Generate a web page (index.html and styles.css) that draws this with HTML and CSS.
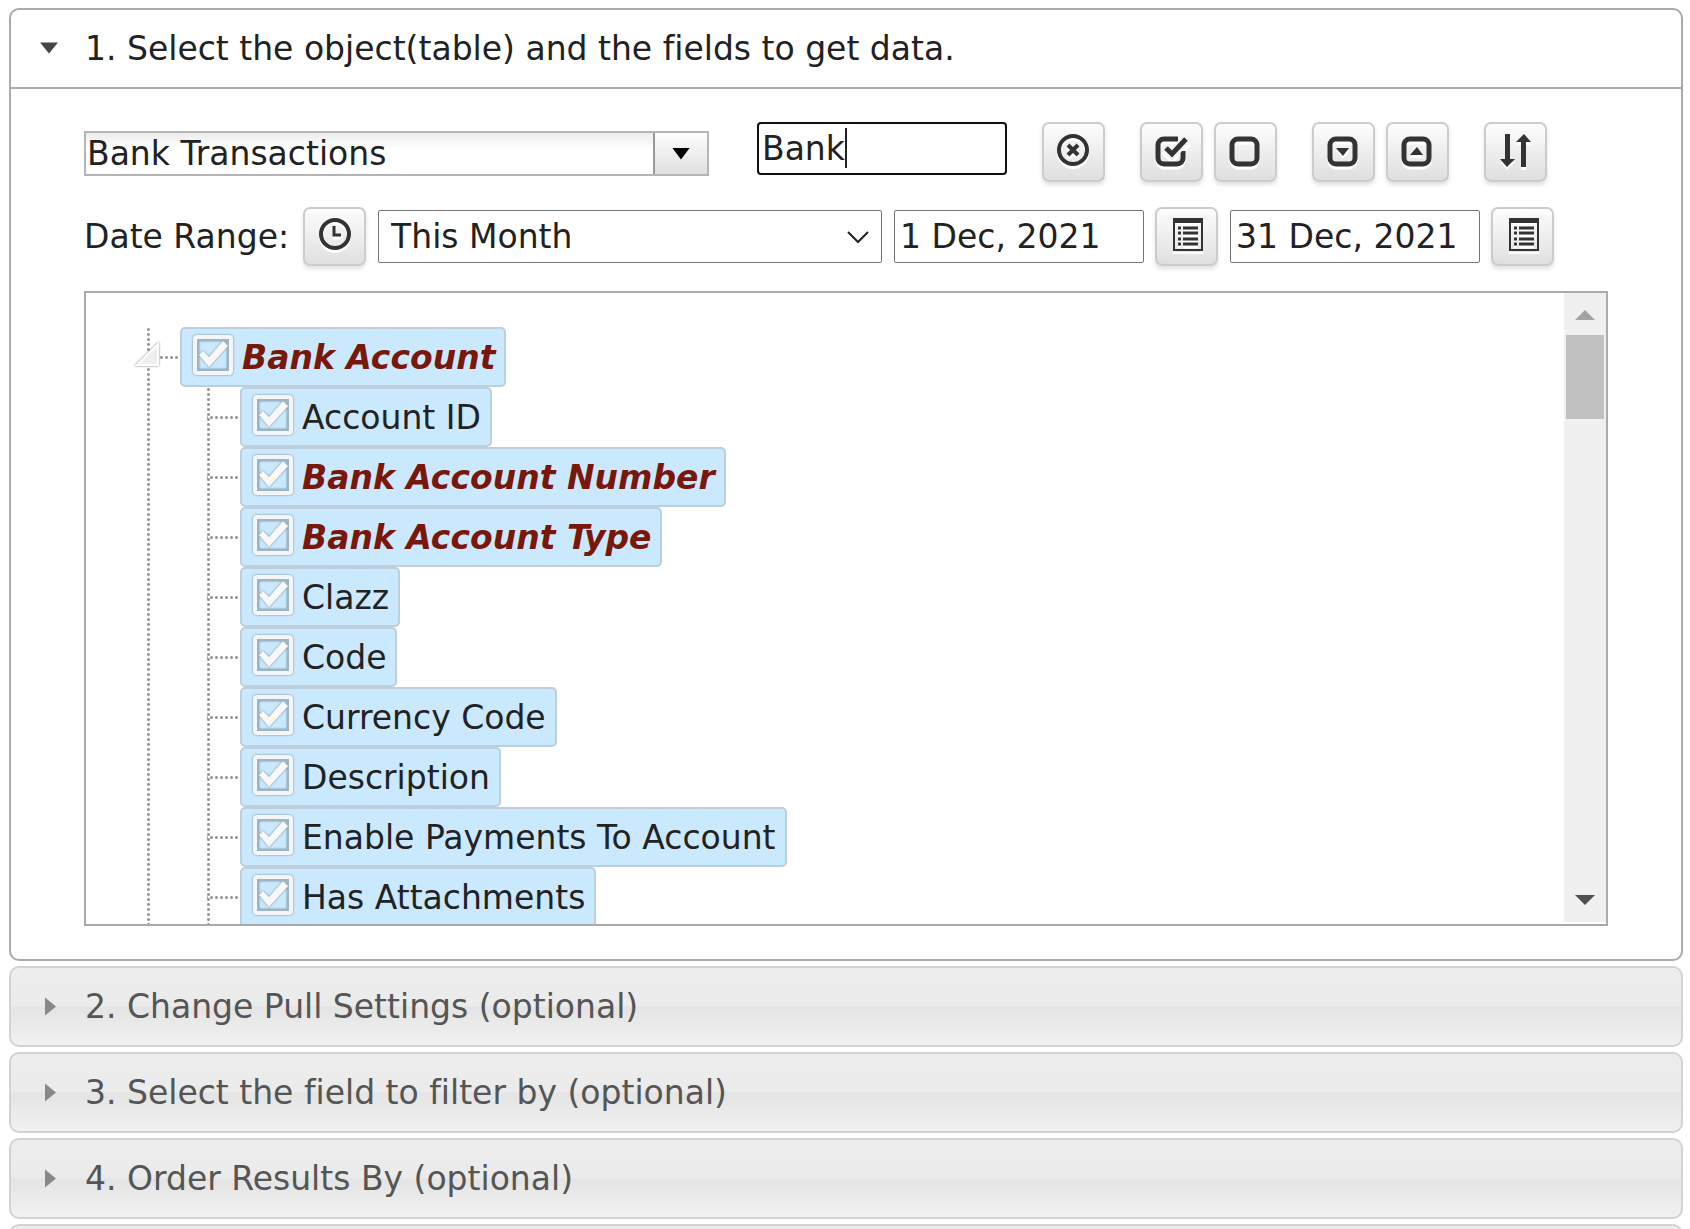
FILE: index.html
```html
<!DOCTYPE html>
<html lang="en">
<head>
  <meta charset="UTF-8" />
  <meta name="viewport" content="width=device-width, initial-scale=1.0"/>
  <title>Select Data</title>
  <link rel="stylesheet" href="styles.css">
</head>

<body>
  <div class="accordion">
    <!-- Step 1 -->
    <button type="button" class="step step-open" aria-expanded="true"><span class="arrow arrow-down"></span>1. Select the object(table) and the fields to get data.</button>
    <div class="panel">
      <div class="toolbar">
        <div class="combo">
          <input type="text" class="combo-input" value="Bank Transactions" aria-label="Object" />
          <button type="button" class="combo-button" aria-label="Show objects"><span class="combo-arrow"></span></button>
        </div>
        <div class="tools">
          <input type="text" class="text-box search" value="Bank" aria-label="Search fields" />
          <button type="button" class="icon-button" aria-label="Clear search">
            <svg class="icon" viewBox="0 0 34 36"><circle cx="16" cy="16" r="14" fill="none" stroke="#333" stroke-width="4"/><path d="M11 11l10 10M21 11l-10 10" stroke="#333" stroke-width="4"/></svg>
          </button>
          <div class="tool-pair">
            <button type="button" class="icon-button" aria-label="Select all">
              <svg class="icon" viewBox="0 0 34 36"><path d="M23 5H9a6 6 0 0 0-6 6v13a6 6 0 0 0 6 6h13a6 6 0 0 0 6-6v-7" fill="none" stroke="#333" stroke-width="5"/><path d="M10 13l7 7L32 5" fill="none" stroke="#f3f3f3" stroke-width="10"/><path d="M11 14l6 6L31 5" fill="none" stroke="#333" stroke-width="5"/></svg>
            </button>
            <button type="button" class="icon-button" aria-label="Unselect all">
              <svg class="icon" viewBox="0 0 34 36"><rect x="3" y="5" width="25" height="25" rx="6" fill="none" stroke="#333" stroke-width="5"/></svg>
            </button>
          </div>
          <div class="tool-pair">
            <button type="button" class="icon-button" aria-label="Expand all">
              <svg class="icon" viewBox="0 0 34 36"><rect x="3" y="5" width="25" height="25" rx="6" fill="none" stroke="#333" stroke-width="5"/><path d="M9 14h13l-6 8z" fill="#333"/></svg>
            </button>
            <button type="button" class="icon-button" aria-label="Collapse all">
              <svg class="icon" viewBox="0 0 34 36"><rect x="3" y="5" width="25" height="25" rx="6" fill="none" stroke="#333" stroke-width="5"/><path d="M9 21h13l-6-8z" fill="#333"/></svg>
            </button>
          </div>
          <button type="button" class="icon-button" aria-label="Sort fields">
            <svg class="icon" viewBox="0 0 34 36"><path d="M6 0h5v25h5L8 33 1 25h5zM22 33V8h-5l8-8 7 8h-5v25z" fill="#333"/></svg>
          </button>
        </div>
      </div>

      <div class="date-range">
        <label for="range" class="range-label">Date Range:</label>
        <button type="button" class="icon-button" aria-label="Use date range">
          <svg class="icon" viewBox="0 0 34 36"><circle cx="17" cy="15" r="14" fill="none" stroke="#333" stroke-width="4"/><path d="M16 7v9h7" fill="none" stroke="#333" stroke-width="3"/></svg>
        </button>
        <select id="range" class="range-select">
          <option>This Month</option>
        </select>
        <div class="date-field">
          <input type="text" class="text-box" value="1 Dec, 2021" aria-label="From date" />
          <button type="button" class="icon-button" aria-label="Pick from date">
            <svg class="icon" viewBox="0 0 34 36"><path d="M3-1h30v33H3zM5 4v26h26V4z" fill="#333" fill-rule="evenodd"/><path d="M8 9h3M8 14h3M8 20h3M8 25h3M13 9h15M13 14h15M13 20h15M13 25h15" stroke="#333" stroke-width="3"/></svg>
          </button>
        </div>
        <div class="date-field">
          <input type="text" class="text-box" value="31 Dec, 2021" aria-label="To date" />
          <button type="button" class="icon-button" aria-label="Pick to date">
            <svg class="icon" viewBox="0 0 34 36"><path d="M3-1h30v33H3zM5 4v26h26V4z" fill="#333" fill-rule="evenodd"/><path d="M8 9h3M8 14h3M8 20h3M8 25h3M13 9h15M13 14h15M13 20h15M13 25h15" stroke="#333" stroke-width="3"/></svg>
          </button>
        </div>
      </div>

      <div class="tree-box">
        <ul class="tree">
          <li class="branch">
            <svg class="expander" viewBox="0 0 26 26"><path d="M24 2v21H3z" fill="#eee" stroke="#fff" stroke-width="2"/></svg>
            <label class="node match"><input type="checkbox" class="tick" checked />Bank Account</label>
            <ul class="fields">
              <li><label class="node"><input type="checkbox" class="tick" checked />Account ID</label></li>
              <li><label class="node match"><input type="checkbox" class="tick" checked />Bank Account Number</label></li>
              <li><label class="node match"><input type="checkbox" class="tick" checked />Bank Account Type</label></li>
              <li><label class="node"><input type="checkbox" class="tick" checked />Clazz</label></li>
              <li><label class="node"><input type="checkbox" class="tick" checked />Code</label></li>
              <li><label class="node"><input type="checkbox" class="tick" checked />Currency Code</label></li>
              <li><label class="node"><input type="checkbox" class="tick" checked />Description</label></li>
              <li><label class="node"><input type="checkbox" class="tick" checked />Enable Payments To Account</label></li>
              <li><label class="node"><input type="checkbox" class="tick" checked />Has Attachments</label></li>
            </ul>
          </li>
        </ul>
        <div class="scrollbar">
          <span class="scroll-up"></span>
          <span class="scroll-thumb"></span>
          <span class="scroll-down"></span>
        </div>
      </div>
    </div>

    <!-- Optional steps -->
    <button type="button" class="step" aria-expanded="false"><span class="arrow arrow-right"></span>2. Change Pull Settings (optional)</button>
    <button type="button" class="step" aria-expanded="false"><span class="arrow arrow-right"></span>3. Select the field to filter by (optional)</button>
    <button type="button" class="step" aria-expanded="false"><span class="arrow arrow-right"></span>4. Order Results By (optional)</button>
    <button type="button" class="step" aria-expanded="false" aria-label="Next step"></button>
  </div>
</body>
</html>
```

FILE: styles.css
```css
* {
  box-sizing: border-box;
}
body {
  margin: 0;
  height: 100vh;
  overflow: hidden;
  background: #fff;
  color: #222;
}
body, button, input, select {
  font-family: Verdana, "DejaVu Sans", sans-serif;
  font-size: 33px;
  font-variant-ligatures: none;
}
button, input, select {
  color: #222;
  margin: 0;
}
.accordion {
  padding: 8px 7px 0 9px;
}

/* Accordion headers */
.step {
  display: flex;
  align-items: center;
  width: 100%;
  height: 81px;
  margin-top: 5px;
  padding: 0 28px;
  border: 2px solid #d3d3d3;
  border-radius: 10px;
  background: linear-gradient(#ededed 0%, #ebebeb 49%, #e4e4e4 51%, #f1f1f1 100%);
  color: #555;
  text-align: left;
  cursor: pointer;
}
.step-open {
  margin-top: 0;
  border-color: #aaa;
  border-radius: 10px 10px 0 0;
  background: #fff;
  color: #222;
}
.arrow {
  width: 46px;
}
.arrow::before {
  content: "";
  display: block;
  width: 20px;
  height: 20px;
  background: #888;
  clip-path: polygon(6px 1px, 17px 10px, 6px 19px);
}
.arrow-down::before {
  background: #454545;
  clip-path: polygon(1px 4px, 19px 4px, 10px 15px);
}

/* Step 1 panel */
.panel {
  padding: 33px 73px;
  border: 2px solid #aaa;
  border-top: none;
  border-radius: 0 0 10px 10px;
}
.toolbar {
  display: flex;
  align-items: flex-start;
  gap: 48px;
}
.combo {
  display: flex;
  width: 625px;
  height: 45px;
  margin-top: 9px;
  border: 2px solid #b5b5b5;
}
.combo-input {
  flex: 1;
  min-width: 0;
  padding: 0 0 0 1px;
  border: none;
  background: linear-gradient(#ececec, #fff 16px);
}
.combo-button {
  display: flex;
  align-items: center;
  justify-content: center;
  width: 54px;
  padding: 0;
  border: none;
  border-left: 2px solid #999;
  background: linear-gradient(#fdfdfd, #dfdfdf);
}
.combo-arrow {
  width: 18px;
  height: 12px;
  background: #000;
  clip-path: polygon(0 0, 100% 0, 50% 100%);
}
.tools {
  display: flex;
  gap: 35px;
}
.tool-pair {
  display: flex;
  gap: 11px;
}
.text-box {
  width: 250px;
  height: 53px;
  padding: 0 5px;
  border: 1px solid #767676;
  border-radius: 2px;
  background: #fff;
}
/* focused look, with the caret after the typed word */
.search {
  padding: 0 3px;
  border: 2px solid #101010;
  border-radius: 4px;
  background: linear-gradient(#222, #222) 86px 4px / 2px 40px no-repeat #fff;
  outline: none;
}
.icon-button {
  display: flex;
  align-items: center;
  justify-content: center;
  width: 63px;
  height: 59px;
  padding: 0;
  border: 2px solid #ccc;
  border-radius: 7px;
  background: linear-gradient(#fdfdfd, #dfdfdf);
  box-shadow: 0 3px 4px rgba(0, 0, 0, 0.12);
  cursor: pointer;
}
.tools .icon-button {
  height: 60px;
}
.icon {
  width: 34px;
  height: 36px;
  overflow: visible;
  filter: drop-shadow(0 3px 0 #fff);
}

/* Date range */
.date-range {
  display: flex;
  align-items: center;
  gap: 12px;
  margin: 25px 0;
}
.range-label {
  padding-right: 2px;
}
.range-select {
  width: 504px;
  height: 53px;
  padding: 0 12px;
  border: 1px solid #767676;
  border-radius: 2px;
  appearance: none;
  background: url("data:image/svg+xml,%3Csvg xmlns='http://www.w3.org/2000/svg' width='22' height='14'%3E%3Cpath d='M1 2l10 10L21 2' fill='none' stroke='%23222' stroke-width='2'/%3E%3C/svg%3E") right 12px center no-repeat #fff;
}
.date-field {
  display: flex;
  align-items: center;
  gap: 11px;
}

/* Field tree */
.tree-box {
  display: flex;
  height: 635px;
  border: 2px solid #aaa;
}
.tree {
  flex: 1;
  margin: 0;
  padding: 34px 0 0 61px;
  overflow: hidden;
  list-style: none;
}
.branch {
  position: relative;
  padding-left: 33px;
}
/* dotted guides: one down the left edge, one across to the node */
.branch, .fields li {
  background: linear-gradient(#fff, #fff) 32px 0 no-repeat,
    radial-gradient(circle, #999 1px, transparent 2px) 0 0 / 3px 5px repeat-y,
    radial-gradient(circle, #999 1px, transparent 2px) 2px 29px / 5px 3px repeat-x;
}
.expander {
  position: absolute;
  left: -13px;
  top: 15px;
  width: 26px;
  height: 26px;
  filter: drop-shadow(0 0 1px #777);
}
.fields {
  margin: 0;
  padding: 0 0 0 27px;
  list-style: none;
}
.fields li {
  padding-left: 33px;
}
.node {
  display: flex;
  align-items: center;
  width: max-content;
  height: 60px;
  padding: 0 9px;
  border: 2px solid #bccfdb;
  border-radius: 5px;
  background: #cbe9fe;
}
.match {
  color: #79170b;
  font-weight: bold;
  font-style: italic;
}
.tick {
  flex: none;
  width: 42px;
  height: 42px;
  margin: 0 8px 4px 1px;
  appearance: none;
  background: url("data:image/svg+xml,%3Csvg xmlns='http://www.w3.org/2000/svg' viewBox='0 0 42 42'%3E%3Crect x='6' y='6' width='30' height='30' fill='none' stroke='%239db4c3' stroke-width='2'/%3E%3Crect x='3' y='3' width='36' height='36' rx='2' fill='none' stroke='%23f3f5f7' stroke-width='4'/%3E%3Cpath d='M7 21l4-4 6 6L31 7l5 5-19 21z' fill='%23f8f8f8'/%3E%3C/svg%3E") center no-repeat;
  filter: drop-shadow(0 0 1px #71899a);
}
.scrollbar {
  display: flex;
  flex-direction: column;
  align-items: center;
  width: 42px;
  margin-bottom: 2px;
  background: #f0f0f0;
}
.scroll-up, .scroll-down {
  width: 20px;
  height: 10px;
  margin-top: 17px;
  background: #a3a3a3;
  clip-path: polygon(50% 0, 100% 100%, 0 100%);
}
.scroll-thumb {
  width: 38px;
  height: 84px;
  margin-top: 15px;
  background: #c1c1c1;
}
.scroll-down {
  margin-top: auto;
  margin-bottom: 17px;
  background: #505050;
  clip-path: polygon(0 0, 100% 0, 50% 100%);
}
```
